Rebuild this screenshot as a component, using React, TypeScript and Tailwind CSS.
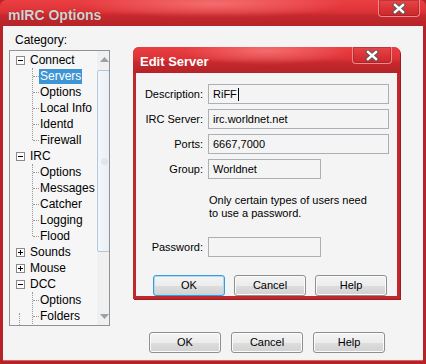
import React from "react";

const FONT = { fontFamily: '"Liberation Sans", Arial, sans-serif' };

function CloseX() {
  return (
    <svg width="14" height="11" viewBox="0 0 14 11">
      <path d="M3 2 L11 9 M11 2 L3 9" stroke="#5a5a5a" strokeWidth="4.4" strokeLinecap="square" />
      <path d="M3 2 L11 9 M11 2 L3 9" stroke="#ffffff" strokeWidth="2.4" strokeLinecap="square" />
    </svg>
  );
}

function CloseButton({ w }: { w: string }) {
  return (
    <div
      className={`${w} h-[17px] flex items-center justify-center rounded-b-[4px] border border-t-0 border-[#f08a8a] bg-[linear-gradient(180deg,#e5474a_0%,#dc3438_50%,#c8282d_100%)] shadow-[inset_0_0_0_1px_rgba(140,20,20,0.35)]`}
    >
      <CloseX />
    </div>
  );
}

const titleBg =
  "bg-[radial-gradient(ellipse_at_50%_15%,rgba(255,150,150,0.55)_0%,rgba(255,120,120,0)_45%),linear-gradient(180deg,#ea3e42_0%,#dd3337_45%,#c5292e_60%,#b52328_100%)]";

function Button({ label, focus, className = "" }: { label: string; focus?: boolean; className?: string }) {
  return (
    <div
      className={`w-[72px] h-[21px] flex items-center justify-center rounded-[3px] border text-[11px] text-black bg-[linear-gradient(180deg,#f4f4f4_0%,#ececec_50%,#dddddd_52%,#d2d2d2_100%)] ${
        focus ? "border-[#3c9ad4] shadow-[inset_0_0_0_1px_#a8dcf4]" : "border-[#8e8f8f] shadow-[inset_0_0_0_1px_#fbfbfb]"
      } ${className}`}
    >
      {label}
    </div>
  );
}

type Node = { label: string; state?: "open" | "closed"; children?: string[]; more?: boolean };

const tree: Node[] = [
  { label: "Connect", state: "open", children: ["Servers", "Options", "Local Info", "Identd", "Firewall"] },
  { label: "IRC", state: "open", children: ["Options", "Messages", "Catcher", "Logging", "Flood"] },
  { label: "Sounds", state: "closed" },
  { label: "Mouse", state: "closed" },
  { label: "DCC", state: "open", children: ["Options", "Folders"], more: true },
];

function ExpandBox({ open }: { open: boolean }) {
  return (
    <div className="relative w-[9px] h-[9px] border border-[#8a8a8a] bg-white flex items-center justify-center">
      <div className="w-[5px] h-px bg-black" />
      {!open && <div className="absolute w-px h-[5px] bg-black" />}
    </div>
  );
}

function Tree() {
  return (
    <div className="relative w-[101px] h-[276px] border border-[#8f9296] bg-[#f6f6f6] overflow-hidden flex">
      <div className="relative flex-1 pt-[1px] flex flex-col">
        {/* root line continuing past the last visible node */}
        <div className="absolute left-[9px] top-[262px] h-[14px] border-l border-dotted border-[#9a9a9a]" />
        {tree.map((n, i) => (
          <div key={i} className="flex flex-col">
            <div className="h-[16px] flex items-center">
              <div className="w-[15px] shrink-0 flex justify-end pl-[5px]">
                <ExpandBox open={n.state === "open"} />
              </div>
              <span className="ml-[5px] text-[12px] leading-none text-black">{n.label}</span>
            </div>
            {n.children && (
              <div className="relative flex flex-col">
                <div
                  className={`absolute left-[22px] top-0 border-l border-dotted border-[#9a9a9a] ${
                    n.more ? "h-[calc(100%+16px)]" : "h-[calc(100%-8px)]"
                  }`}
                />
                {n.children.map((c, j) => (
                  <div key={j} className="h-[16px] flex items-center">
                    <div className="ml-[23px] w-[6px] border-t border-dotted border-[#9a9a9a]" />
                    <span
                      className={`px-[1px] h-[15px] flex items-center text-[12px] leading-none ${
                        n.label === "Connect" && j === 0 ? "bg-[#3d95d6] text-white" : "text-black"
                      }`}
                    >
                      {c}
                    </span>
                  </div>
                ))}
              </div>
            )}
          </div>
        ))}
      </div>
      {/* scrollbar */}
      <div className="w-[17px] shrink-0 bg-[#f0f0f0] flex flex-col items-center border-l border-[#f8f8f8]">
        <div className="h-[17px] flex items-center justify-center">
          <svg width="9" height="5" viewBox="0 0 9 5">
            <path d="M0 5 L4.5 0 L9 5 Z" fill="#9aa1a8" />
          </svg>
        </div>
        <div className="w-[15px] h-[182px] mt-[2px] rounded-[2px] border border-[#b4c6da] bg-[linear-gradient(90deg,#f3f7fb,#e8eef6)] flex items-center justify-center">
          <div className="w-[7px] h-[7px] rounded-full bg-[#dfe6ee]" />
        </div>
        <div className="flex-1" />
        <div className="h-[17px] flex items-center justify-center">
          <svg width="9" height="5" viewBox="0 0 9 5">
            <path d="M0 0 L9 0 L4.5 5 Z" fill="#9aa1a8" />
          </svg>
        </div>
      </div>
    </div>
  );
}

function Field({ label, value, short, caret }: { label: string; value?: string; short?: boolean; caret?: boolean }) {
  return (
    <div className="flex items-center">
      <div className="w-[67px] text-right text-[11px] text-black">{label}</div>
      <div
        className={`ml-[5px] ${short ? "w-[113px]" : "w-[181px]"} h-[20px] border border-[#abb0b6] bg-[#f4f4f4] flex items-center pl-[4px] text-[11px] text-black`}
      >
        {value}
        {caret && <span className="ml-px w-px h-[13px] bg-black" />}
      </div>
    </div>
  );
}

export default function App() {
  return (
    <div className="relative w-[426px] h-[364px] overflow-hidden bg-[#b52328]" style={FONT}>
      {/* main window */}
      <div className="w-full h-full flex flex-col rounded-t-[6px] overflow-hidden">
        <div className={`h-[26px] shrink-0 flex items-start justify-between ${titleBg}`}>
          <span className="ml-[8px] mt-[5px] text-[14px] font-bold text-[#d2d2d2] [text-shadow:0_0_1px_rgba(90,0,0,0.6)]">
            mIRC Options
          </span>
          <CloseButton w="w-[42px] mr-[6px]" />
        </div>
        <div className="flex-1 mx-[3px] mb-[3px] bg-[#f4f4f4] border-b border-[#e06060] flex flex-col">
          <div className="pl-[9px] pt-[6px] flex flex-col">
            <div className="text-[12px] text-black ml-[3px] h-[17px] leading-[17px]">Category:</div>
            <div className="mt-[1px] -ml-[3px]">
              <Tree />
            </div>
          </div>
          <div className="flex-1" />
          <div className="flex gap-[10px] pl-[146px] pb-[7px]">
            <Button label="OK" />
            <Button label="Cancel" />
            <Button label="Help" />
          </div>
        </div>
      </div>

      {/* Edit Server dialog */}
      <div className="absolute left-[133px] top-[47px] w-[267px] h-[252px] flex flex-col rounded-t-[6px] overflow-hidden bg-[#c0282d] shadow-[1px_1px_0_#9a1f23]">
        <div className={`h-[26px] shrink-0 flex items-start justify-between ${titleBg}`}>
          <span className="ml-[7px] mt-[5px] text-[13px] font-bold text-white">Edit Server</span>
          <CloseButton w="w-[40px] mr-[8px]" />
        </div>
        <div className="flex-1 mx-[3px] mb-[3px] bg-[#f4f4f4] flex flex-col pt-[11px]">
          <div className="flex flex-col gap-[5px]">
            <Field label="Description:" value="RiFF" caret />
            <Field label="IRC Server:" value="irc.worldnet.net" />
            <Field label="Ports:" value="6667,7000" />
            <Field label="Group:" value="Worldnet" short />
          </div>
          <div className="ml-[73px] mt-[15px] text-[11px] leading-[13px] text-black">
            Only certain types of users need
            <br />
            to use a password.
          </div>
          <div className="mt-[17px]">
            <Field label="Password:" short />
          </div>
          <div className="mt-[18px] ml-[17px] flex gap-[9px]">
            <Button label="OK" focus />
            <Button label="Cancel" />
            <Button label="Help" />
          </div>
        </div>
      </div>
    </div>
  );
}
